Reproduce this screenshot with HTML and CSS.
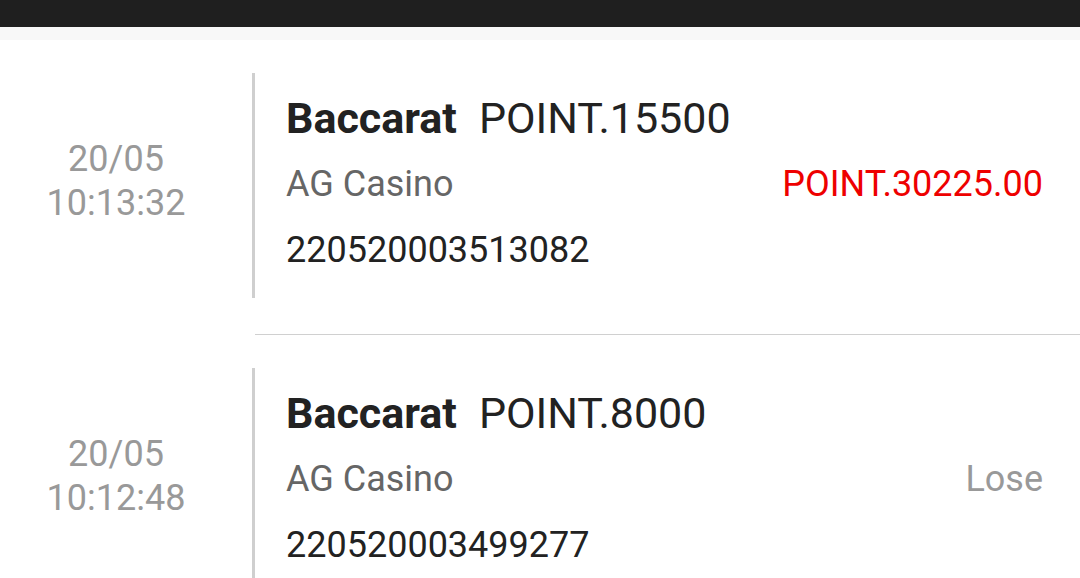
FILE: index.html
```html
<!DOCTYPE html>
<html lang="en">
<head>
    <meta charset="UTF-8">
    <meta name="viewport" content="width=device-width, initial-scale=1.0">
    <title>Bet Records</title>
    <link rel="stylesheet" href="styles.css">
</head>
<body>
    <!-- barra superior -->
    <div class="topbar"></div>
    <div class="strip"></div>

    <!-- lista de apostas -->
    <div class="records">
        <div class="record">
            <div class="time">
                <div>20/05</div>
                <div>10:13:32</div>
            </div>
            <div class="body">
                <div class="detail">
                    <div class="title"><b>Baccarat</b><span class="stake">POINT.15500</span></div>
                    <div class="line">
                        <span class="vendor">AG Casino</span>
                        <span class="result win">POINT.30225.00</span>
                    </div>
                    <div class="order">220520003513082</div>
                </div>
            </div>
        </div>

        <div class="record">
            <div class="time">
                <div>20/05</div>
                <div>10:12:48</div>
            </div>
            <div class="body">
                <div class="detail">
                    <div class="title"><b>Baccarat</b><span class="stake">POINT.8000</span></div>
                    <div class="line">
                        <span class="vendor">AG Casino</span>
                        <span class="result lose">Lose</span>
                    </div>
                    <div class="order">220520003499277</div>
                </div>
            </div>
        </div>
    </div>
</body>
</html>
```

FILE: styles.css
```css
body{ margin: 0; background: #fff; font-family: Roboto, "Noto Sans", sans-serif; overflow: hidden; }
.topbar{ height: 27px; background: #1f1f1f; }
.strip{ height: 13px; background: #f8f8f8; }

.record{ display: flex; }
.time{ width: 252px; flex: none; display: flex; flex-direction: column; justify-content: center; align-items: center; font-size: 36px; line-height: 44px; color: #999; padding: 0 20px 14px 0; box-sizing: border-box; }
.body{ flex: 1; margin-left: 3px; padding: 33px 0 36px; border-bottom: 1px solid #d0d0d0; }
.detail{ margin-left: -3px; border-left: 3px solid #cfcfcf; padding: 12px 37px 15px 31px; }

.title{ font-size: 43px; line-height: 66px; color: #222; }
.title b{ font-weight: 700; }
.stake{ margin-left: 22px; }
.line{ display: flex; justify-content: space-between; font-size: 36px; line-height: 66px; }
.vendor{ color: #666; }
.win{ color: #e00; }
.lose{ color: #999; }
.order{ font-size: 36px; line-height: 66px; color: #222; }
```
